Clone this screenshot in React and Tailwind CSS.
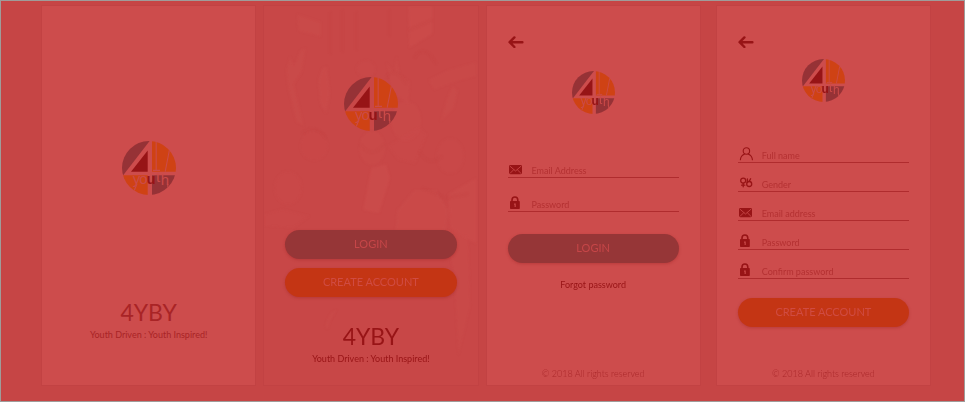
import React from "react";

function Logo({ className }) {
  return (
    <svg viewBox="0 0 54 54" className={className} role="img" aria-label="4 youth">
      <defs>
        <clipPath id="disc"><circle cx="27" cy="27" r="27" /></clipPath>
      </defs>
      <g clipPath="url(#disc)">
        <path d="M0 0H27.6L1.2 34.3H0Z" fill="#963236" />
        <path d="M25.7 9.5V30.7H9Z" fill="#971416" />
        <path d="M30 0H54V30.7H30Z" fill="#cf4214" />
        <path d="M0 34.3H25.7V54H0Z" fill="#cf4214" />
        <path d="M30 34.3H54V54H30Z" fill="#963236" />
        <path d="M34.2 0V29.2M31 29.4H38M47.4 9L43.2 30.7M15 43L12 50M45.8 43L46 50" fill="none" stroke="#cb4a48" strokeWidth="1.1" />
      </g>
      <g fontFamily="'Liberation Sans Narrow', 'Liberation Sans', sans-serif" fontSize="15" fill="#cb4a48" textAnchor="middle">
        <text x="14.5" y="43">y</text>
        <text x="21.5" y="43">o</text>
        <text x="29" y="43" fill="#971416" fontWeight="bold">u</text>
        <text x="36" y="41">t</text>
        <text x="43" y="44">h</text>
      </g>
    </svg>
  );
}

function ArrowIcon() {
  return (
    <svg viewBox="0 0 16 12" className="h-3 w-4" fill="none" stroke="#981416" strokeWidth="2.4" strokeLinecap="round" strokeLinejoin="round" aria-hidden="true">
      <path d="M6.4 1.4L1.6 6.2L6.4 11M2 6.2H14.4" />
    </svg>
  );
}

function MailIcon() {
  return (
    <svg viewBox="0 0 16 14" className="h-3.5 w-4" aria-hidden="true">
      <rect x="1" y="3" width="13" height="9.2" rx="1.4" fill="#981416" />
      <path d="M2 4.2L7.5 9L13 4.2M2 11.4L5.8 7.6M13 11.4L9.2 7.6" fill="none" stroke="#cd4c4c" strokeWidth="0.8" />
    </svg>
  );
}

function LockIcon() {
  return (
    <svg viewBox="0 0 16 14" className="h-3.5 w-4" aria-hidden="true">
      <path d="M4 7V4C4 2 5.1 1 6.9 1S9.8 2 9.8 4V7" fill="none" stroke="#981416" strokeWidth="1.6" />
      <rect x="2" y="5" width="9.8" height="8" rx="0.8" fill="#981416" />
      <path d="M6.1 7.4H7.7V11H6.6V8.8H6.1Z" fill="#cd4c4c" />
    </svg>
  );
}

function UserIcon() {
  return (
    <svg viewBox="0 0 16 14" className="h-3.5 w-4" fill="none" stroke="#981416" strokeWidth="1.1" strokeLinecap="round" aria-hidden="true">
      <circle cx="8.4" cy="4" r="3.2" />
      <path d="M2.4 12.8C2.6 9.6 4.2 8 6.6 7M14.4 12.8C14.2 9.6 12.6 8 10.2 7" />
    </svg>
  );
}

function GenderIcon() {
  return (
    <svg viewBox="0 0 16 14" className="h-3.5 w-4" fill="none" stroke="#981416" strokeWidth="1.3" strokeLinecap="round" aria-hidden="true">
      <circle cx="5.2" cy="4.6" r="2.5" />
      <path d="M5.2 7.2V10.8M3.6 9.2H6.8" />
      <circle cx="11.2" cy="8" r="2.5" />
      <path d="M9.4 6.4V3M11.2 5.4L12.6 2.8" />
    </svg>
  );
}

function CrowdPhoto() {
  return (
    <svg viewBox="0 0 213 379" preserveAspectRatio="none" className="absolute inset-0 h-full w-full" aria-hidden="true">
      <defs>
        <filter id="soft" x="-10%" y="-10%" width="120%" height="120%"><feGaussianBlur stdDeviation="1.2" /></filter>
      </defs>
      <g filter="url(#soft)" fill="#cf5150" opacity="0.45">
        <path d="M33 8L57 16V31L34 25Z" opacity=".6" />
        <path d="M144 0H168V28L145 42Z" opacity=".9" />
        <path d="M22 64L26 50L30 60L36 44L42 42L38 66L30 78L40 120L32 116L24 82Z" opacity=".6" />
        <path d="M54 74L58 62L63 60L66 88L62 108L56 98Z" opacity=".7" />
        <path d="M122 56L130 66L132 50L136 68L146 76L144 98L128 86Z" opacity=".5" />
        <path d="M164 74L184 64L212 56V70L190 76L170 84Z" opacity=".5" />
        <path d="M182 94L188 80L194 84L190 102L176 116Z" opacity=".6" />
        <ellipse cx="142" cy="115" rx="15" ry="20" opacity=".5" />
        <ellipse cx="108" cy="142" rx="13" ry="17" opacity=".5" />
        <ellipse cx="50" cy="140" rx="14" ry="15" opacity=".3" />
        <ellipse cx="24" cy="182" rx="14" ry="17" opacity=".4" />
        <ellipse cx="186" cy="150" rx="14" ry="18" opacity=".35" />
        <ellipse cx="102" cy="63" rx="10" ry="9" opacity=".35" />
        <path d="M107 162L122 158L126 172L115 207L99 204Z" />
        <path d="M123 140L155 121L163 128L151 158L134 154Z" opacity=".4" />
        <path d="M133 204L150 184L172 184L184 204L180 240H130Z" opacity=".7" />
        <path d="M184 188L212 172V238L186 222Z" opacity=".8" />
        <path d="M180 222L204 230L206 300L194 350L190 270Z" opacity=".5" />
        <path d="M0 208L18 203L46 210L30 222L0 220Z" opacity=".4" />
        <path d="M61 322Q63 307 73 303L66 315L64 323Z" opacity=".6" />
      </g>
      <g filter="url(#soft)" fill="none" stroke="#bf3e3e" strokeWidth="2" opacity="0.3">
        <path d="M145 24L168 14M66 6V48M78 4V46M92 6V44M125 4V30" opacity=".5" />
        <path d="M150 52Q160 36 172 58M122 72Q130 58 142 78M158 182L182 192L204 188M38 128Q50 116 62 132" opacity=".5" />
        <path d="M155 145Q164 162 178 150M96 138Q108 154 120 138" opacity=".4" />
      </g>
    </svg>
  );
}

function Panel({ className = "", children }) {
  return (
    <section className={"relative flex h-[381px] min-w-0 flex-1 flex-col items-center border border-[#c24243] px-[21px] " + className}>
      {children}
    </section>
  );
}

function Brand({ color }) {
  return (
    <div className={"relative flex flex-col items-center " + color}>
      <h1 className="text-[23px] leading-7">4YBY</h1>
      <p className="text-[9px] leading-[18px] whitespace-nowrap">Youth Driven : Youth Inspired!</p>
    </div>
  );
}

function PillButton({ tone, className = "", children }) {
  return (
    <button type="button" className={"relative h-[29px] w-full shrink-0 rounded-full pb-px text-[11px] leading-4 shadow-[0_1px_3px_rgba(150,30,30,0.35)] " + tone + " " + className}>
      {children}
    </button>
  );
}

const LOGIN = "bg-[#963637] text-[#c64648]";
const CREATE = "bg-[#c43514] text-[#d04b42]";

function Field({ icon, label, type = "text", height = "h-[29px]" }) {
  const control = "min-w-0 flex-1 appearance-none bg-transparent p-0 text-[9px] leading-3 text-[#b43132] outline-none placeholder:text-[#b43132] placeholder:opacity-100";
  return (
    <label className={"flex w-full items-end gap-2 border-b border-[#b02c2e] " + height}>
      <span className="shrink-0 pb-px">{icon}</span>
      {type === "select" ? (
        <select aria-label={label} defaultValue="" className={control}>
          <option value="">{label}</option>
        </select>
      ) : (
        <input type={type} aria-label={label} placeholder={label} className={control} />
      )}
    </label>
  );
}

function BackButton() {
  return (
    <button type="button" aria-label="Back" className="mt-[30px] self-start">
      <ArrowIcon />
    </button>
  );
}

function Copyright() {
  return <footer className="mt-auto pb-1 text-[9px] leading-[14px] font-light text-[#aa282a]">© 2018 All rights reserved</footer>;
}

export default function App() {
  return (
    <main className="flex min-h-screen items-start gap-[7px] border border-[#9f9c9a] bg-[#c64545] pt-1 pr-[33px] pb-[14px] pl-10 font-['Lato',sans-serif]">
      <Panel className="bg-[#cd4c4c]">
        <Logo className="mt-[135px] mb-[103px] size-[54px] overflow-visible" />
        <Brand color="text-[#a92426]" />
      </Panel>

      <Panel className="bg-[#c84747]">
        <CrowdPhoto />
        <Logo className="relative mt-[71px] size-[54px] overflow-visible" />
        <PillButton tone={LOGIN} className="mt-[99px]">LOGIN</PillButton>
        <PillButton tone={CREATE} className="mt-[9px] mb-[25px]">CREATE ACCOUNT</PillButton>
        <Brand color="text-[#981416]" />
      </Panel>

      <Panel className="bg-[#cd4c4c]">
        <BackButton />
        <Logo className="mt-[23px] mb-[29px] size-[43px] overflow-visible" />
        <Field icon={<MailIcon />} label="Email Address" type="email" height="h-[35px]" />
        <Field icon={<LockIcon />} label="Password" type="password" height="h-[34px]" />
        <PillButton tone={LOGIN} className="mt-[22px]">LOGIN</PillButton>
        <a href="#forgot" className="mt-[14px] text-[9px] leading-4 text-[#981416]">Forgot password</a>
        <Copyright />
      </Panel>

      <Panel className="ml-2 bg-[#cd4c4c]">
        <BackButton />
        <Logo className="mt-[11px] mb-[32px] size-[43px] overflow-visible" />
        <Field icon={<UserIcon />} label="Full name" />
        <Field icon={<GenderIcon />} label="Gender" type="select" />
        <Field icon={<MailIcon />} label="Email address" type="email" />
        <Field icon={<LockIcon />} label="Password" type="password" />
        <Field icon={<LockIcon />} label="Confirm password" type="password" />
        <PillButton tone={CREATE} className="mt-[19px]">CREATE ACCOUNT</PillButton>
        <Copyright />
      </Panel>
    </main>
  );
}
